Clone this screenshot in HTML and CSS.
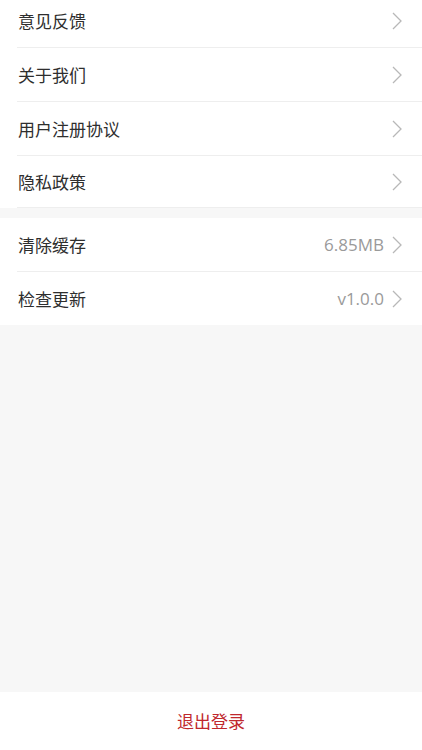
FILE: index.html
```html
<!DOCTYPE html>
<html lang="zh-CN">
<head>
  <meta charset="UTF-8" />
  <title>设置</title>
  <link rel="stylesheet" href="styles.css">
</head>
<body>
  <div class="page">
    <div class="settings">
      <!-- 第一组 -->
      <div class="group">
        <div class="cell">
          <span class="cell-title">意见反馈</span>
          <span class="cell-right"><svg class="arrow" viewBox="0 0 10 18"><path d="M1 1 L9 9 L1 17" /></svg></span>
        </div>
        <div class="cell">
          <span class="cell-title">关于我们</span>
          <span class="cell-right"><svg class="arrow" viewBox="0 0 10 18"><path d="M1 1 L9 9 L1 17" /></svg></span>
        </div>
        <div class="cell">
          <span class="cell-title">用户注册协议</span>
          <span class="cell-right"><svg class="arrow" viewBox="0 0 10 18"><path d="M1 1 L9 9 L1 17" /></svg></span>
        </div>
        <div class="cell short">
          <span class="cell-title">隐私政策</span>
          <span class="cell-right"><svg class="arrow" viewBox="0 0 10 18"><path d="M1 1 L9 9 L1 17" /></svg></span>
        </div>
      </div>

      <!-- 第二组 -->
      <div class="group">
        <div class="cell">
          <span class="cell-title">清除缓存</span>
          <span class="cell-right"><span class="cell-value">6.85MB</span><svg class="arrow" viewBox="0 0 10 18"><path d="M1 1 L9 9 L1 17" /></svg></span>
        </div>
        <div class="cell last">
          <span class="cell-title">检查更新</span>
          <span class="cell-right"><span class="cell-value">v1.0.0</span><svg class="arrow" viewBox="0 0 10 18"><path d="M1 1 L9 9 L1 17" /></svg></span>
        </div>
      </div>
    </div>

    <div class="logout">退出登录</div>
  </div>
</body>
</html>
```

FILE: styles.css
```css
* {
  box-sizing: border-box;
}

html, body {
  margin: 0;
  padding: 0;
}

body {
  font-family: "Noto Sans CJK SC", "Noto Sans", sans-serif;
  background: #f7f7f7;
  color: #333;
}

.page {
  display: flex;
  flex-direction: column;
  height: 100vh;
  overflow: hidden;
}

.settings {
  flex: 1;
  margin-top: -6px;
}

.group {
  background: #fff;
  margin-bottom: 10px;
}

.cell {
  display: flex;
  align-items: center;
  justify-content: space-between;
  height: 54px;
  margin-left: 17px;
  padding-right: 20px;
  border-bottom: 1px solid #eeeeee;
}

.cell.short {
  height: 52px;
}

.cell.last {
  border-bottom: none;
  height: 53px;
}

.cell-title {
  font-size: 17px;
  padding-left: 1px;
  color: #2e2e2e;
}

.cell-right {
  display: flex;
  align-items: center;
  gap: 8px;
}

.cell-value {
  font-family: "Open Sans", "Noto Sans", sans-serif;
  font-size: 17px;
  color: #9a9a9a;
}

.arrow {
  width: 10px;
  height: 18px;
  fill: none;
  stroke: #b8b8b8;
  stroke-width: 1.3;
}

.logout {
  height: 58px;
  background: #fff;
  display: flex;
  align-items: center;
  justify-content: center;
  font-size: 17px;
  color: #c0282d;
  padding-bottom: 2px;
}
```
